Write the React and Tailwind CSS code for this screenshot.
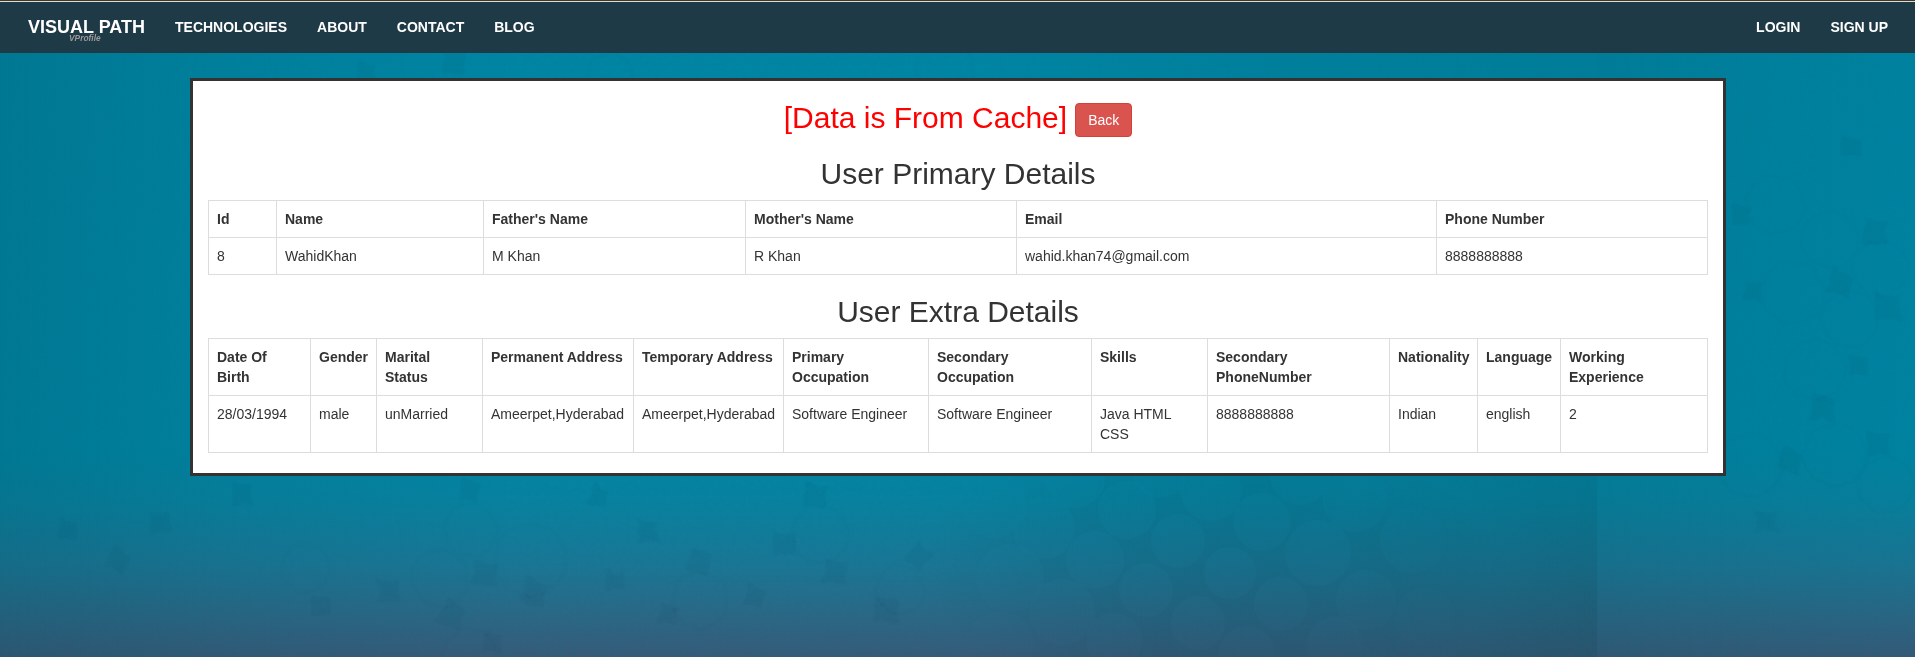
const navLinks = ["TECHNOLOGIES", "ABOUT", "CONTACT", "BLOG"];

const primary = [
  ["Id", "8", "w-[68px]"],
  ["Name", "WahidKhan", "w-[207px]"],
  ["Father's Name", "M Khan", "w-[262px]"],
  ["Mother's Name", "R Khan", "w-[271px]"],
  ["Email", "wahid.khan74@gmail.com", "w-[420px]"],
  ["Phone Number", "8888888888", "w-[271px]"],
];

const extra = [
  ["Date Of Birth", "28/03/1994", "w-[102px]"],
  ["Gender", "male", "w-[66px]"],
  ["Marital Status", "unMarried", "w-[106px]"],
  ["Permanent Address", "Ameerpet,Hyderabad", "w-[151px]"],
  ["Temporary Address", "Ameerpet,Hyderabad", "w-[150px]"],
  ["Primary Occupation", "Software Engineer", "w-[145px]"],
  ["Secondary Occupation", "Software Engineer", "w-[163px]"],
  ["Skills", "Java HTML CSS", "w-[116px]"],
  ["Secondary PhoneNumber", "8888888888", "w-[182px]"],
  ["Nationality", "Indian", "w-[88px]"],
  ["Language", "english", "w-[83px]"],
  ["Working Experience", "2", "w-[147px]"],
];

// Overlapping discs: [cx, cy, r]
const discs = [
  [993, 505, 33], [1044, 528, 31], [1075, 478, 30], [1127, 510, 29], [1095, 560, 29],
  [1178, 541, 27], [1211, 490, 31], [1262, 522, 29], [1230, 573, 26], [1146, 590, 27],
  [1198, 623, 27], [1281, 604, 27], [1010, 578, 34], [1062, 612, 33], [1114, 641, 28],
  [1247, 654, 28], [1318, 553, 33], [1300, 475, 30], [1355, 500, 32], [1366, 600, 30],
  [1335, 645, 28], [1413, 540, 33], [1425, 618, 30], [1000, 645, 34], [1160, 470, 28],
  [492, 611, 28],
];

// Faint separate discs, seen mostly by their rim
const rims = [
  [1830, 240, 28], [1880, 268, 27], [1850, 319, 28], [1793, 293, 31], [1815, 370, 30],
  [1835, 455, 31], [1750, 465, 31], [1775, 205, 29], [1886, 485, 28],
  [530, 560, 36], [470, 530, 26], [440, 578, 28], [305, 568, 24], [900, 590, 24],
  [470, 658, 28], [610, 75, 22], [945, 70, 28], [700, 600, 28], [820, 535, 28],
];

// Darker gaps left between neighbouring discs: [x, y, size, rotation]
const gaps = [
  [815, 496, 11, 8], [784, 544, 11, 0], [699, 562, 11, 20], [886, 610, 12, 5], [918, 556, 10, 40],
  [598, 496, 9, 20], [470, 490, 10, 10], [648, 532, 10, 0], [452, 615, 12, 30], [485, 574, 12, 10],
  [534, 592, 12, 20], [388, 590, 11, 0], [160, 522, 10, 0], [118, 560, 10, 30], [242, 495, 10, 0],
  [668, 614, 9, 10], [755, 596, 9, 20], [835, 572, 11, 10], [615, 580, 9, 0], [68, 530, 9, 10],
  [366, 71, 8, 10], [454, 62, 11, 5], [1740, 215, 9, 10], [1875, 232, 12, 5], [1840, 284, 12, 20],
  [1887, 307, 13, 0], [1858, 366, 9, 0], [1823, 408, 12, 10], [1790, 460, 11, 20], [1878, 444, 11, 0],
  [1851, 147, 9, 5], [1752, 291, 9, 10], [1766, 522, 10, 0], [492, 642, 9, 10], [320, 606, 9, 0],
];

function Backdrop() {
  return (
    <svg className="absolute inset-0 h-full w-full" viewBox="0 0 1915 657" preserveAspectRatio="none" aria-hidden="true">
      <defs>
        <linearGradient id="sea" x1="0" y1="0" x2="0" y2="657" gradientUnits="userSpaceOnUse">
          <stop offset="0" stopColor="#0085a3" />
          <stop offset="0.68" stopColor="#0086a4" />
          <stop offset="0.76" stopColor="#0882a0" />
          <stop offset="0.86" stopColor="#1b7695" />
          <stop offset="0.94" stopColor="#2c6785" />
          <stop offset="1" stopColor="#375b79" />
        </linearGradient>
        <linearGradient id="edges" x1="0" y1="0" x2="1600" y2="0" gradientUnits="userSpaceOnUse">
          <stop offset="0" stopColor="#003d4b" stopOpacity="0.18" />
          <stop offset="0.14" stopColor="#003d4b" stopOpacity="0.08" />
          <stop offset="0.32" stopColor="#003d4b" stopOpacity="0" />
          <stop offset="0.62" stopColor="#003d4b" stopOpacity="0" />
          <stop offset="0.8" stopColor="#003d4b" stopOpacity="0.08" />
          <stop offset="1" stopColor="#003d4b" stopOpacity="0.11" />
        </linearGradient>
        <linearGradient id="tile" x1="0" y1="0" x2="1" y2="0">
          <stop offset="0" stopColor="#003d4b" stopOpacity="0.12" />
          <stop offset="1" stopColor="#003d4b" stopOpacity="0.04" />
        </linearGradient>
        <radialGradient id="corner" cx="1600" cy="610" r="270" gradientUnits="userSpaceOnUse">
          <stop offset="0" stopColor="#0d3540" stopOpacity="0.15" />
          <stop offset="1" stopColor="#0d3540" stopOpacity="0" />
        </radialGradient>
        <radialGradient id="shade">
          <stop offset="0" stopColor="#00394a" stopOpacity="0.13" />
          <stop offset="0.6" stopColor="#00394a" stopOpacity="0.1" />
          <stop offset="1" stopColor="#00394a" stopOpacity="0" />
        </radialGradient>
        <filter id="grain" x="0" y="0" width="100%" height="100%">
          <feTurbulence type="fractalNoise" baseFrequency="0.22" numOctaves="3" seed="4" />
          <feColorMatrix values="0 0 0 0 0  0 0 0 0 0.2  0 0 0 0 0.27  0.5 0 0 0 -0.18" />
        </filter>
        <filter id="rough" x="-5%" y="-5%" width="110%" height="110%">
          <feTurbulence type="fractalNoise" baseFrequency="0.08" numOctaves="2" seed="9" />
          <feDisplacementMap in="SourceGraphic" scale="7" xChannelSelector="R" yChannelSelector="G" />
          <feGaussianBlur stdDeviation="0.8" />
        </filter>
      </defs>
      <rect width="1915" height="657" fill="url(#sea)" />
      <ellipse cx="1210" cy="570" rx="290" ry="150" fill="url(#shade)" />
      <g fill="url(#sea)" fillOpacity="0.45">
        {discs.map(([x, y, r]) => (
          <circle key={`${x}-${y}`} cx={x} cy={y} r={r} />
        ))}
      </g>
      <g filter="url(#rough)">
        <g fill="#003c50" fillOpacity="0.075">
          {gaps.map(([x, y, s, r]) => (
            <path
              key={`${x}-${y}`}
              d="M-1-1.1Q0-.7 .9-.9Q.7 0 1.1 1Q0 .7-.9 1.1Q-.7 0-1-1.1Z"
              transform={`translate(${x} ${y}) rotate(${r}) scale(${s})`}
            />
          ))}
        </g>
        <g fill="none" stroke="#003c50" strokeOpacity="0.015" strokeWidth="2">
          {rims.map(([x, y, r]) => (
            <circle key={`${x}-${y}`} cx={x} cy={y} r={r} />
          ))}
        </g>
      </g>
      <rect width="1597" height="657" fill="url(#edges)" />
      <rect x="1597" width="318" height="657" fill="url(#tile)" />
      <rect x="1300" y="320" width="297" height="337" fill="url(#corner)" />
      <rect width="1915" height="657" filter="url(#grain)" opacity="0.35" />
    </svg>
  );
}

function DetailTable({ columns }) {
  return (
    <table className="mb-5 w-[1500px] table-fixed border-collapse text-left text-sm leading-5">
      <thead>
        <tr>
          {columns.map(([label, , width]) => (
            <th key={label} className={`${width} border border-[#ddd] p-2 align-top font-bold`}>
              {label}
            </th>
          ))}
        </tr>
      </thead>
      <tbody>
        <tr>
          {columns.map(([label, value]) => (
            <td key={label} className="border border-[#ddd] p-2 align-top">
              {value}
            </td>
          ))}
        </tr>
      </tbody>
    </table>
  );
}

export default function App() {
  return (
    <div className="relative h-[657px] w-[1915px] overflow-hidden bg-[#0083a0] font-['Liberation_Sans',Arial,sans-serif] text-[#333]">
      <Backdrop />
      <div className="relative">
        <nav className="flex h-[53px] items-start border-t border-[#3c3835] bg-[#1f3a47] text-sm leading-5 font-bold text-white">
          <div className="flex w-full justify-between border-t border-[#e4dccb]">
            <div className="flex pt-[15px]">
              <a href="#" className="mr-[30px] ml-7 block w-[117px] text-lg whitespace-nowrap">
                <span className="block h-[17px] leading-5">VISUAL PATH</span>
                <span className="block h-2 pl-[41px] text-[8.4px] leading-[8px] text-[#999] italic">VProfile</span>
              </a>
              <div className="flex gap-[30px]">
                {navLinks.map((link) => (
                  <a key={link} href="#">{link}</a>
                ))}
              </div>
            </div>
            <div className="flex gap-[30px] pt-[15px] pr-[27px]">
              <a href="#">LOGIN</a>
              <a href="#">SIGN UP</a>
            </div>
          </div>
        </nav>
        <main className="mt-[25px] ml-[190px] h-[398px] w-[1536px] border-[3px] border-[#333] bg-white px-[15px] pt-5">
          <div className="mb-5 flex h-9 items-end justify-center gap-2">
            <h2 className="pb-[2px] text-[30px] leading-[34px] text-[red]">[Data is From Cache]</h2>
            <button className="h-[34px] rounded border border-[#d43f3a] bg-[#d9534f] px-3 text-sm leading-5 text-white">Back</button>
          </div>
          <h2 className="mb-2.5 text-center text-[30px] leading-[33px]">User Primary Details</h2>
          <DetailTable columns={primary} />
          <h2 className="mb-2.5 text-center text-[30px] leading-[33px]">User Extra Details</h2>
          <DetailTable columns={extra} />
        </main>
      </div>
    </div>
  );
}
